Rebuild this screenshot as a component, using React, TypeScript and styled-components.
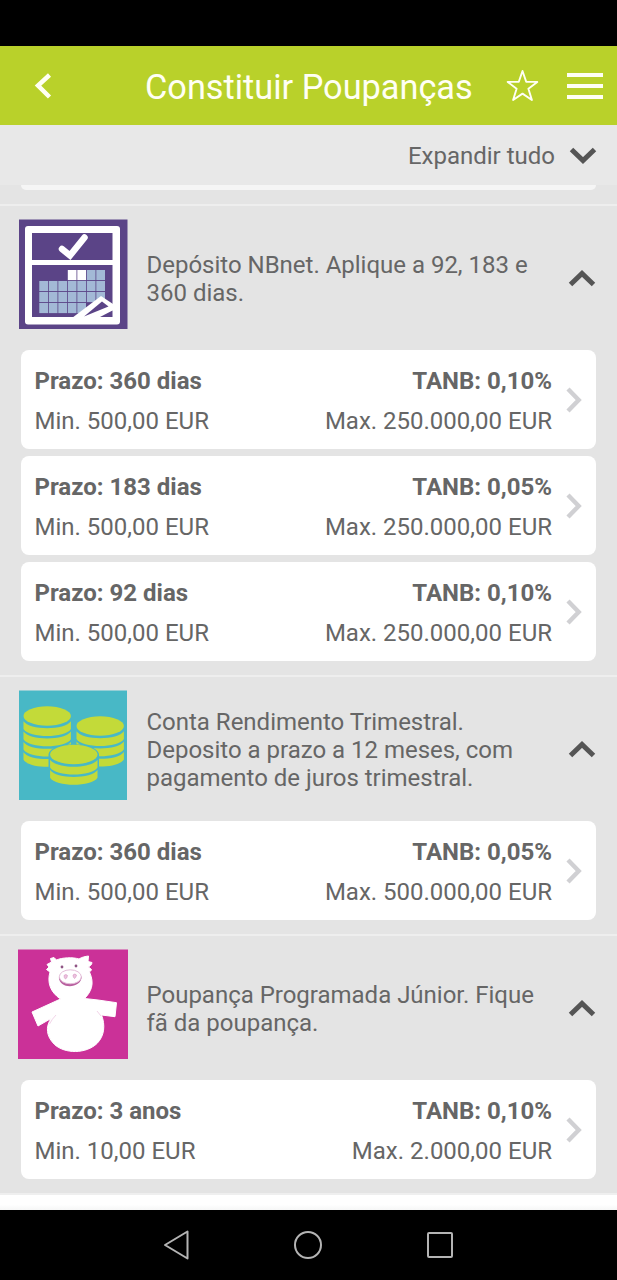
import React from 'react';
import styled, { createGlobalStyle } from 'styled-components';

const GlobalStyle = createGlobalStyle`
  * { box-sizing: border-box; }
  body { margin: 0; background: #000; font-family: Roboto, sans-serif; color: #666; }
  svg { display: block; flex: none; }
`;

const Screen = styled.div`
  width: 617px;
  height: 1280px;
  display: flex;
  flex-direction: column;
  overflow: hidden;
  background: #fff;
`;

const StatusBar = styled.div`
  flex: none;
  height: 46px;
  background: #000;
`;

const Header = styled.header`
  flex: none;
  height: 79px;
  padding: 0 14px 0 34px;
  display: flex;
  align-items: center;
  background: #b9d12a;
  color: #fffff4;
`;

const Title = styled.h1`
  flex: 1;
  margin: 0;
  padding: 3px 0 0 93px;
  font-size: 34.3px;
  line-height: 41px;
  font-weight: 400;
  white-space: nowrap;
`;

const HeaderIcons = styled.div`
  display: flex;
  align-items: center;
  gap: 28px;
`;

const ExpandBar = styled.div`
  flex: none;
  height: 60px;
  padding: 1px 20px 0 0;
  display: flex;
  align-items: center;
  justify-content: flex-end;
  gap: 14px;
  background: #e8e8e8;
  font-size: 24px;
  line-height: 28px;
`;

const List = styled.main`
  flex: 1;
  min-height: 0;
  overflow: hidden;
  background: #fff;
`;

const PreviousGroup = styled.div`
  height: 19px;
  padding: 0 21px;
  background: #e4e4e4;
`;

const PreviousCardEdge = styled.div`
  height: 5px;
  border-radius: 0 0 7px 7px;
  background: #f5f5f5;
`;

const Group = styled.section`
  padding: 13px 21px 14px;
  border-top: 2px solid #eeeeee;
  background: #e4e4e4;
`;

const GroupHeader = styled.div`
  height: 110px;
  margin: 0 0 21px -3px;
  display: flex;
  align-items: center;
`;

const GroupText = styled.p`
  flex: 1;
  margin: 0 0 0 18.5px;
  padding-top: 10px;
  font-size: 24px;
  line-height: 28px;
  letter-spacing: -0.01px;
  white-space: pre-line;
`;

const ToggleSlot = styled.div`
  padding-top: 7px;
`;

const Cards = styled.div`
  display: flex;
  flex-direction: column;
  gap: 7px;
`;

const Card = styled.article`
  height: 99px;
  padding: 0 14px 0 13.5px;
  display: flex;
  align-items: center;
  border-radius: 8px;
  background: #fff;
`;

const Column = styled.div<{ $end?: boolean }>`
  flex: 1;
  padding-top: 3px;
  display: flex;
  flex-direction: column;
  gap: 11.5px;
  text-align: ${(p) => (p.$end ? 'right' : 'left')};
  margin-right: ${(p) => (p.$end ? '14px' : '0')};
`;

const Line = styled.div<{ $bold?: boolean }>`
  font-size: 24px;
  line-height: 28px;
  font-weight: ${(p) => (p.$bold ? 700 : 400)};
  white-space: nowrap;
`;

const NextGroup = styled.div`
  height: 18px;
  border-top: 2px solid #efefef;
  background: linear-gradient(#fff 60%, #f4f5f5);
`;

const NavBar = styled.nav`
  flex: none;
  height: 70px;
  padding: 0 163.5px 0 163px;
  display: flex;
  align-items: center;
  justify-content: space-between;
  background: #000;
`;

const Chevron = ({ up = false }: { up?: boolean }) => (
  <svg width="28" height="18" viewBox="0 0 28 18" fill="none" stroke="#555" strokeWidth="5">
    <path d={up ? 'M2.5 15.5 14 4.5 25.5 15.5' : 'M2.5 2.5 14 13.5 25.5 2.5'} />
  </svg>
);

const CardArrow = () => (
  <svg width="16" height="26" viewBox="0 0 16 26" fill="none" stroke="#d0d0d3" strokeWidth="4.4">
    <path d="M2 2 12.7 13 2 24" />
  </svg>
);

const CalendarIcon = () => (
  <svg width="110" height="110" viewBox="0 0 110 110">
    <rect x="1" y="0.5" width="108.500" height="109.500" fill="#5b4487" />
    <rect x="7" y="7" width="95" height="98.500" rx="3" fill="#fff" />
    <rect x="14" y="14" width="80.500" height="27" fill="#5b4487" />
    <rect x="14" y="46" width="80.500" height="52" fill="#5b4487" />
    <path d="M44 30 52 36.500 66.500 18.500" fill="none" stroke="#fff" strokeWidth="6.500" strokeLinecap="round" />
    {[0, 1, 2, 3].map((row) =>
      [0, 1, 2, 3, 4, 5, 6].map((col) => {
        if (row === 0 && col < 3) return null;
        if (row === 3 && col > 4) return null;
        return (
          <rect
            key={`${row}-${col}`}
            x={21.3 + col * 9.5}
            y={51 + row * 11}
            width="8.700"
            height="10.100"
            fill={row === 0 && col < 5 ? '#fff' : '#a3b9d6'}
          />
        );
      })
    )}
    <path d="M54 99 83 77 98 87 95 99z" fill="#fff" />
    <path d="M66 97.500 84 82.500 90.500 87.500z" fill="#5b4487" />
    <path d="M82 98 94.500 91.500V98z" fill="#5b4487" />
  </svg>
);

interface CoinStackProps {
  cx: number;
  cy: number;
  slabs: number;
}

const CoinStack = ({ cx, cy, slabs }: CoinStackProps) => (
  <g fill="#c3da39">
    <ellipse cx={cx} cy={cy} rx="23.700" ry="9.700" />
    {Array.from({ length: slabs }, (_, i) => (
      <path
        key={i}
        transform={`translate(${cx} ${cy + 5.3 + i * 10.3})`}
        d="M-23.700 0C-18 9.200 18 9.200 23.700 0V7.600C18 17 -18 17 -23.700 7.600z"
      />
    ))}
  </g>
);

const CoinsIcon = () => (
  <svg width="110" height="110" viewBox="0 0 110 110">
    <rect x="1" y="0.5" width="108" height="109.500" fill="#48b8c6" />
    <CoinStack cx={29.2} cy={26} slabs={4} />
    <CoinStack cx={82.2} cy={36} slabs={3} />
    <path d="M30.500 64C33 51 78 51 81 64V92H30.500z" fill="#48b8c6" />
    <CoinStack cx={55.8} cy={64.5} slabs={2} />
  </svg>
);

const PigIcon = () => (
  <svg width="110" height="110" viewBox="0 0 110 110">
    <rect y="0.5" width="110" height="109.500" fill="#cb3198" />
    <path
      d="M32.500 9.500 36 8.500 38.500 11C44 8.500 55 8 61 10C64 8 67 7.500 70.500 7L70 12.500 74 13.500C74 15.500 72 17 70.500 18L73.500 20.500C73 22 72 22.500 71.500 23C77 35 73 43 66.500 49.500L80 51 98.500 53.700 97 67.700 83.500 66C87.500 76 86.500 87 79 94.500C68 105 47 105 36.500 95.500C28 87 27.500 78 33 69.500L20 77 14 63 42.500 50C32 43 29 33 32 23L28.500 20.500 31 18 29 15.500 33.500 13z"
      fill="#fff"
      stroke="#fff"
      strokeWidth="1"
      strokeLinejoin="round"
    />
    <path d="M38 66Q34 70 31.500 75M79 62 83 67" fill="none" stroke="#f2d4e8" strokeWidth="1" />
    <circle cx="44" cy="18" r="1.400" fill="#8f5484" />
    <circle cx="58" cy="17" r="1.400" fill="#8f5484" />
    <path d="M40.800 28.500C41.500 40.500 63 40 63.800 27.500z" fill="#b8609f" />
    <ellipse cx="52.300" cy="27.800" rx="11" ry="7" fill="#fff" stroke="#e3bcd8" strokeWidth="1" />
    <path d="M46 26.500q2-2 3.500 0-.5 3-2 3.500-1.500-1-1.500-3.500M55 26q2-2 3.500 0-.5 3-2 3.500-1.500-1-1.500-3.500" fill="#ecc3df" stroke="#d592bf" strokeWidth=".6" />
  </svg>
);

const groups = [
  {
    icon: <CalendarIcon />,
    text: 'Depósito NBnet. Aplique a 92, 183 e\n360 dias.',
    cards: [
      ['360 dias', '0,10%', '500,00', '250.000,00'],
      ['183 dias', '0,05%', '500,00', '250.000,00'],
      ['92 dias', '0,10%', '500,00', '250.000,00'],
    ],
  },
  {
    icon: <CoinsIcon />,
    text: 'Conta Rendimento Trimestral.\nDeposito a prazo a 12 meses, com\npagamento de juros trimestral.',
    cards: [['360 dias', '0,05%', '500,00', '500.000,00']],
  },
  {
    icon: <PigIcon />,
    text: 'Poupança Programada Júnior. Fique\nfã da poupança.',
    cards: [['3 anos', '0,10%', '10,00', '2.000,00']],
  },
];

export default function App() {
  return (
    <Screen>
      <GlobalStyle />
      <StatusBar />
      <Header>
        <svg width="18" height="26" viewBox="0 0 18 26" fill="none" stroke="currentColor" strokeWidth="4.500">
          <path d="M15.500 2 4 12.500 15.500 24" />
        </svg>
        <Title>Constituir Poupanças</Title>
        <HeaderIcons>
          <svg width="33" height="33" viewBox="0 0 33 33" fill="none" stroke="currentColor" strokeWidth="1.900" strokeLinejoin="round">
            <path d="M16.500 2 20.200 12.700 31.300 12.900 22.400 19.700 25.900 31 16.500 24.600 7.100 31 10.600 19.700 1.700 12.900 12.800 12.700z" />
          </svg>
          <svg width="36" height="26" viewBox="0 0 36 26" fill="currentColor">
            <path d="M0 0h36v4H0zM0 11h36v4H0zM0 22h36v4H0z" />
          </svg>
        </HeaderIcons>
      </Header>
      <ExpandBar>
        Expandir tudo
        <Chevron />
      </ExpandBar>
      <List>
        <PreviousGroup>
          <PreviousCardEdge />
        </PreviousGroup>
        {groups.map((group) => (
          <Group key={group.text}>
            <GroupHeader>
              {group.icon}
              <GroupText>{group.text}</GroupText>
              <ToggleSlot>
                <Chevron up />
              </ToggleSlot>
            </GroupHeader>
            <Cards>
              {group.cards.map(([term, rate, min, max]) => (
                <Card key={term}>
                  <Column>
                    <Line $bold>Prazo: {term}</Line>
                    <Line>Min. {min} EUR</Line>
                  </Column>
                  <Column $end>
                    <Line $bold>TANB: {rate}</Line>
                    <Line>Max. {max} EUR</Line>
                  </Column>
                  <CardArrow />
                </Card>
              ))}
            </Cards>
          </Group>
        ))}
        <NextGroup />
      </List>
      <NavBar>
        <svg width="28" height="30" viewBox="0 0 28 30" fill="none" stroke="#b4b4b4" strokeWidth="2" strokeLinejoin="round">
          <path d="M24.500 1.500V28.500L2 15z" />
        </svg>
        <svg width="30" height="30" viewBox="0 0 30 30" fill="none" stroke="#b4b4b4" strokeWidth="2">
          <circle cx="15" cy="15" r="13" />
        </svg>
        <svg width="28" height="28" viewBox="0 0 28 28" fill="none" stroke="#b4b4b4" strokeWidth="2">
          <rect x="2" y="2" width="24" height="24" rx="1" />
        </svg>
      </NavBar>
    </Screen>
  );
}
